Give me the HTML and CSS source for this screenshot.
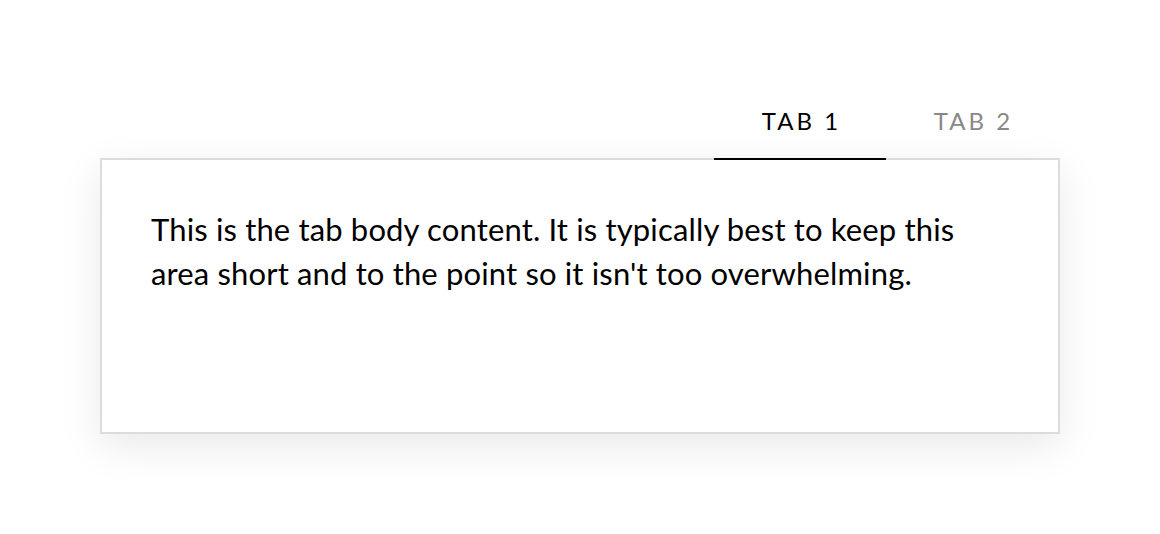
FILE: index.html
```html
<!DOCTYPE html>
<html>
<head>
<meta charset="utf-8">
<link rel="stylesheet" href="styles.css">
</head>
<body>
<div class="page">
  <div class="tabs">
    <div class="tablist">
      <div class="tab active">TAB 1</div>
      <div class="tab">TAB 2</div>
    </div>
    <div class="panel">
      <p class="body">This is the tab body content. It is typically best to keep this area short and to the point so it isn't too overwhelming.</p>
    </div>
  </div>
</div>
</body>
</html>
```
FILE: styles.css
```css
html, body {
  margin: 0;
  padding: 0;
  background: #fff;
}
.page {
  width: 1160px;
  height: 534px;
  padding-top: 100px;
  box-sizing: border-box;
  font-family: Lato, "Open Sans", sans-serif;
}
.tabs {
  width: 960px;
  margin-left: 100px;
}
.tablist {
  display: flex;
  justify-content: flex-end;
  padding-right: 2px;
  position: relative;
  z-index: 2;
}
.tab {
  width: 172px;
  box-sizing: border-box;
  text-align: center;
  font-size: 24px;
  line-height: 30px;
  letter-spacing: 3px;
  color: #888;
  padding: 6px 0 22px 3px;
  border-bottom: 2px solid transparent;
}
.tab.active {
  color: #000;
  border-bottom-color: #000;
}
.panel {
  margin-top: -2px;
  height: 276px;
  box-sizing: border-box;
  border: 2px solid #dcdcdc;
  background: #fff;
  box-shadow: 0 12px 40px rgba(0,0,0,0.09);
  padding: 47px 49px;
}
.body {
  margin: 0;
  font-size: 31px;
  line-height: 44px;
  letter-spacing: 0.15px;
  color: #000;
  width: 820px;
}
```
